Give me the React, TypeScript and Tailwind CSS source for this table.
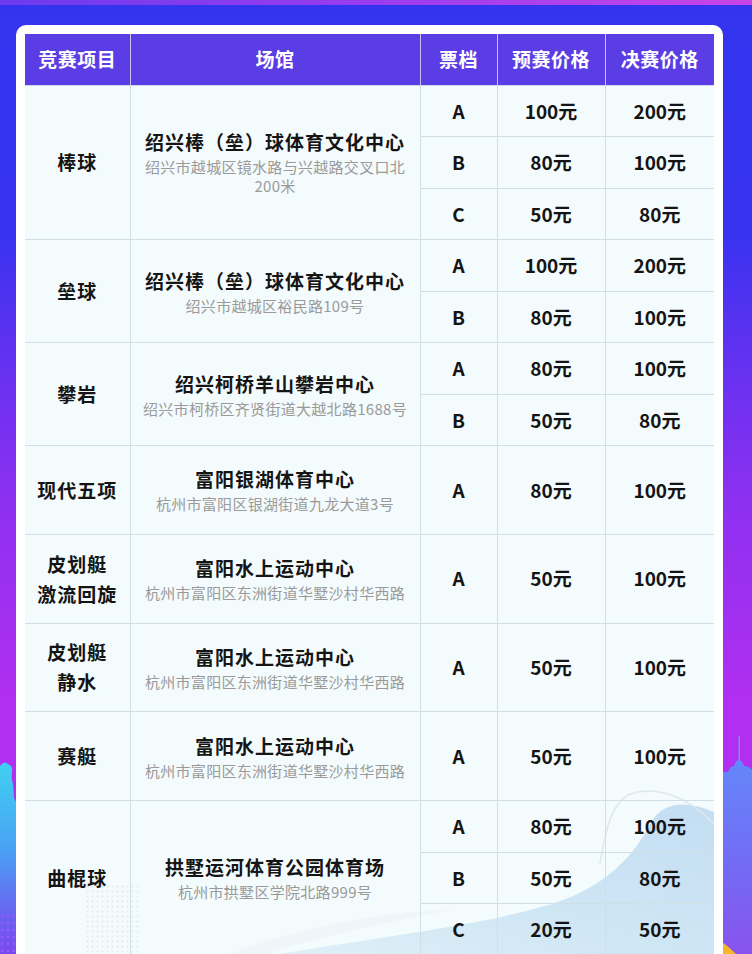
import React from "react";

type Row = {
  sport: string[];
  venue: string;
  addr: string[];
  tiers: [string, string, string][];
};

const rows: Row[] = [
  {
    sport: ["棒球"],
    venue: "绍兴棒（垒）球体育文化中心",
    addr: ["绍兴市越城区镜水路与兴越路交叉口北", "200米"],
    tiers: [
      ["A", "100元", "200元"],
      ["B", "80元", "100元"],
      ["C", "50元", "80元"],
    ],
  },
  {
    sport: ["垒球"],
    venue: "绍兴棒（垒）球体育文化中心",
    addr: ["绍兴市越城区裕民路109号"],
    tiers: [
      ["A", "100元", "200元"],
      ["B", "80元", "100元"],
    ],
  },
  {
    sport: ["攀岩"],
    venue: "绍兴柯桥羊山攀岩中心",
    addr: ["绍兴市柯桥区齐贤街道大越北路1688号"],
    tiers: [
      ["A", "80元", "100元"],
      ["B", "50元", "80元"],
    ],
  },
  {
    sport: ["现代五项"],
    venue: "富阳银湖体育中心",
    addr: ["杭州市富阳区银湖街道九龙大道3号"],
    tiers: [["A", "80元", "100元"]],
  },
  {
    sport: ["皮划艇", "激流回旋"],
    venue: "富阳水上运动中心",
    addr: ["杭州市富阳区东洲街道华墅沙村华西路"],
    tiers: [["A", "50元", "100元"]],
  },
  {
    sport: ["皮划艇", "静水"],
    venue: "富阳水上运动中心",
    addr: ["杭州市富阳区东洲街道华墅沙村华西路"],
    tiers: [["A", "50元", "100元"]],
  },
  {
    sport: ["赛艇"],
    venue: "富阳水上运动中心",
    addr: ["杭州市富阳区东洲街道华墅沙村华西路"],
    tiers: [["A", "50元", "100元"]],
  },
  {
    sport: ["曲棍球"],
    venue: "拱墅运河体育公园体育场",
    addr: ["杭州市拱墅区学院北路999号"],
    tiers: [
      ["A", "80元", "100元"],
      ["B", "50元", "80元"],
      ["C", "20元", "50元"],
    ],
  },
];

const FONT = '"Noto Sans CJK SC", "Noto Sans", "Liberation Sans", sans-serif';

function LeftDeco() {
  return (
    <svg className="absolute left-0 top-[758px]" width="16" height="196" viewBox="0 0 16 196">
      <defs>
        <linearGradient id="lb" x1="0" y1="0" x2="0" y2="1">
          <stop offset="0" stopColor="#3fd0f2" />
          <stop offset="0.45" stopColor="#4aa2f4" />
          <stop offset="0.8" stopColor="#6a62f0" />
          <stop offset="1" stopColor="#7a48ee" />
        </linearGradient>
      </defs>
      <path d="M0 8 Q4 2 8 6 Q13 8 12 14 Q11 20 13 26 L14 40 L16 44 L16 196 L0 196 Z" fill="url(#lb)" />
      {[158, 165, 172, 179, 186, 193].map((y) =>
        [2, 8, 14].map((x) => <circle key={`${x}-${y}`} cx={x} cy={y} r="1.4" fill="#8f5cf5" />)
      )}
    </svg>
  );
}

function RightDeco() {
  return (
    <svg className="absolute right-0 top-[730px]" width="30" height="224" viewBox="0 0 30 224">
      <defs>
        <linearGradient id="rb" x1="0" y1="0" x2="0" y2="1">
          <stop offset="0" stopColor="#6487fa" />
          <stop offset="0.6" stopColor="#7568f4" />
          <stop offset="1" stopColor="#8a52ee" />
        </linearGradient>
      </defs>
      <rect x="16.5" y="6" width="1.5" height="30" fill="#7a8cf6" />
      <path d="M0 42 L6 42 Q8 36 12 36 Q14 30 17 30 Q20 30 22 36 Q27 36 30 40 L30 224 L0 224 Z" fill="url(#rb)" />
      <path d="M0 212 Q6 216 14 224 L0 224 Z" fill="#f7b52a" />
    </svg>
  );
}

function TableWaves() {
  return (
    <svg
      className="absolute left-0 top-0 pointer-events-none"
      width="689"
      height="930"
      viewBox="0 0 689 930"
    >
      <defs>
        <linearGradient id="wv" x1="1" y1="0" x2="0" y2="1">
          <stop offset="0" stopColor="#c3ddf2" />
          <stop offset="0.5" stopColor="#cfe6f5" />
          <stop offset="1" stopColor="#e2f1f8" />
        </linearGradient>
        <pattern id="dots" x="0" y="0" width="5" height="5" patternUnits="userSpaceOnUse">
          <circle cx="2.5" cy="2.5" r="1.1" fill="#dfe6ec" />
        </pattern>
      </defs>
      <path
        d="M689 778 C670 770 640 762 625 790 C605 830 570 858 520 872 C440 895 330 905 200 930 L689 930 Z"
        fill="url(#wv)"
      />
      <path
        d="M689 790 C660 760 630 752 605 760 C585 770 580 800 575 830"
        fill="none"
        stroke="#dfe7ee"
        strokeWidth="1.5"
      />
      <path d="M180 930 C250 900 330 880 430 875 C330 895 260 910 220 930 Z" fill="#eef6fa" />
      <rect x="60" y="850" width="55" height="70" fill="url(#dots)" opacity="0.8" />
    </svg>
  );
}

export default function App() {
  return (
    <div
      className="relative w-[752px] h-[954px] overflow-hidden bg-[linear-gradient(180deg,#3434ef_0px,#3733f0_230px,#6a31f0_380px,#8d30f0_500px,#b02ff0_700px,#b52ff0_954px)]"
      style={{ fontFamily: FONT }}
    >
      <div className="absolute left-0 top-0 w-full h-[5px] bg-gradient-to-r from-[#6d3aee] via-[#9a3cee] to-[#c844e6]" />
      <LeftDeco />
      <RightDeco />

      <div className="relative pt-[25px] pl-[16px]">
        <div className="w-[707px] h-[940px] rounded-t-[10px] bg-white pt-[9px] pl-[9px]">
          <div className="relative w-[689px] bg-[#f4fbfc]">
            <TableWaves />
            <table className="relative w-[689px] border-collapse table-fixed">
              <colgroup>
                <col className="w-[105px]" />
                <col className="w-[290px]" />
                <col className="w-[77px]" />
                <col className="w-[108px]" />
                <col className="w-[109px]" />
              </colgroup>
              <thead>
                <tr className="h-[51px] bg-[#5a3de4]">
                  {["竞赛项目", "场馆", "票档", "预赛价格", "决赛价格"].map((h, i) => (
                    <th
                      key={h}
                      className={`text-white text-[19px] font-bold tracking-[0.5px] text-center align-middle border-b border-[#cdd8ee] ${
                        i > 0 ? "border-l border-l-[#c8c0f0]" : ""
                      }`}
                    >
                      {h}
                    </th>
                  ))}
                </tr>
              </thead>
              <tbody>
                {rows.map((r, ri) =>
                  r.tiers.map((t, ti) => {
                    const multi = r.tiers.length > 1;
                    return (
                      <tr key={`${ri}-${ti}`} className={multi ? "h-[51.5px]" : "h-[88.8px]"}>
                        {ti === 0 && (
                          <>
                            <td
                              rowSpan={r.tiers.length}
                              className="border border-[#d0dfe5] border-l-0 text-center align-middle text-[19px] font-bold tracking-[1px] leading-[30px] text-[#141414]"
                            >
                              {r.sport.map((s) => (
                                <div key={s}>{s}</div>
                              ))}
                            </td>
                            <td
                              rowSpan={r.tiers.length}
                              className="border border-[#d0dfe5] text-center align-middle px-[8px]"
                            >
                              <div className="text-[19px] font-bold tracking-[1px] leading-[26px] text-[#151515]">
                                {r.venue}
                              </div>
                              <div className="mt-[2px] text-[15px] tracking-[0.3px] leading-[19px] text-[#9a9a9a]">
                                {r.addr.map((a) => (
                                  <div key={a}>{a}</div>
                                ))}
                              </div>
                            </td>
                          </>
                        )}
                        {t.map((v, vi) => (
                          <td
                            key={vi}
                            className={`border border-[#d0dfe5] text-center align-middle text-[19px] font-bold text-[#141414] ${
                              vi === 2 ? "border-r-0" : ""
                            }`}
                          >
                            {v}
                          </td>
                        ))}
                      </tr>
                    );
                  })
                )}
              </tbody>
            </table>
          </div>
        </div>
      </div>
    </div>
  );
}
